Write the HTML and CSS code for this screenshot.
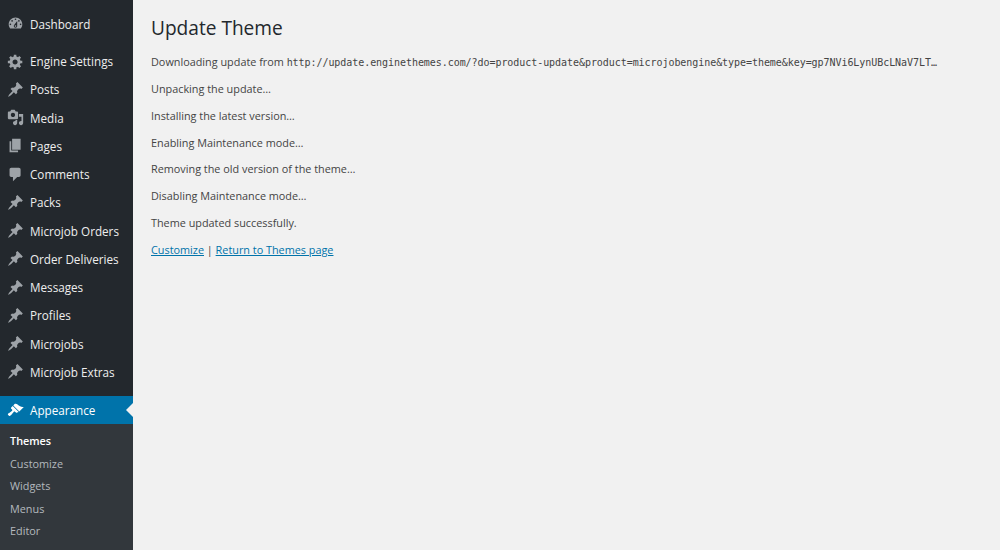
FILE: index.html
```html
<!DOCTYPE html>
<html lang="en">
<head>
  <meta charset="UTF-8">
  <title>Update Theme</title>
  <link rel="stylesheet" href="styles.css">
</head>
<body>
  <svg class="icon-defs" width="0" height="0">
    <symbol id="i-dashboard" viewBox="0 0 20 20"><path d="M3.76 16h12.48c1.1-1.37 1.76-3.11 1.76-5 0-4.42-3.58-8-8-8s-8 3.58-8 8c0 1.89.66 3.63 1.76 5zM10 4c.55 0 1 .45 1 1s-.45 1-1 1-1-.45-1-1 .45-1 1-1zM6 6c.55 0 1 .45 1 1s-.45 1-1 1-1-.45-1-1 .45-1 1-1zm8 0c.55 0 1 .45 1 1s-.45 1-1 1-1-.45-1-1 .45-1 1-1zm-5.37 5.55L12 7v6c0 1.1-.9 2-2 2s-2-.9-2-2c0-.57.24-1.08.63-1.45zM4 10c.55 0 1 .45 1 1s-.45 1-1 1-1-.45-1-1 .45-1 1-1zm12 0c.55 0 1 .45 1 1s-.45 1-1 1-1-.45-1-1 .45-1 1-1zm-5 3c0-.55-.45-1-1-1s-1 .45-1 1 .45 1 1 1 1-.45 1-1z"/></symbol>
    <symbol id="i-gear" viewBox="0 0 20 20"><path d="M18 12h-2.18c-.17.7-.44 1.35-.81 1.93l1.54 1.54-2.1 2.1-1.54-1.54c-.58.36-1.23.63-1.91.79V19H8v-2.18c-.68-.16-1.33-.43-1.91-.79l-1.54 1.54-2.12-2.12 1.54-1.54c-.36-.58-.63-1.23-.79-1.91H1V9.03h2.17c.16-.7.44-1.35.8-1.94L2.43 5.55l2.1-2.1 1.54 1.54c.58-.37 1.24-.64 1.93-.81V2h3v2.18c.68.16 1.33.43 1.91.79l1.54-1.54 2.12 2.12-1.54 1.54c.36.59.64 1.24.8 1.94H18V12zm-8.5 1.5c1.66 0 3-1.34 3-3s-1.34-3-3-3-3 1.34-3 3 1.34 3 3 3z"/></symbol>
    <symbol id="i-pin" viewBox="0 0 20 20"><path d="M10.44 3.02l1.82-1.82 6.36 6.35-1.83 1.82c-1.05-.68-2.48-.57-3.41.36l-.75.75c-.92.93-1.04 2.35-.35 3.41l-1.83 1.82-2.41-2.41-2.8 2.79c-.42.42-3.38 2.71-3.8 2.29s1.86-3.39 2.28-3.81l2.79-2.79L4.1 9.36l1.83-1.82c1.05.69 2.48.57 3.4-.36l.75-.75c.93-.92 1.05-2.35.36-3.41z"/></symbol>
    <symbol id="i-media" viewBox="0 0 20 20"><path d="M13 11V4c0-.55-.45-1-1-1h-1.67L9 1H5L3.67 3H2c-.55 0-1 .45-1 1v7c0 .55.45 1 1 1h10c.55 0 1-.45 1-1zM7 4.5c1.38 0 2.5 1.12 2.5 2.5S8.38 9.5 7 9.5 4.5 8.38 4.5 7 5.62 4.5 7 4.5zM14 6h5v10.5c0 1.38-1.12 2.5-2.5 2.5S14 17.88 14 16.5s1.12-2.5 2.5-2.5c.17 0 .34.02.5.05V9h-3V6zm-4 8.05V13h2v3.5c0 1.38-1.12 2.5-2.5 2.5S7 17.88 7 16.5 8.12 14 9.5 14c.17 0 .34.02.5.05z"/></symbol>
    <symbol id="i-pages" viewBox="0 0 20 20"><path d="M6 15V2h10v13H6zm-1 1h8v2H3V5h2v11z"/></symbol>
    <symbol id="i-comments" viewBox="0 0 20 20"><path d="M5 2h9c1.1 0 2 .9 2 2v7c0 1.1-.9 2-2 2h-2l-5 5v-5H5c-1.1 0-2-.9-2-2V4c0-1.1.9-2 2-2z"/></symbol>
    <symbol id="i-brush" viewBox="0 0 20 20"><path d="M14.48 11.06L7.41 3.99l1.5-1.5c.5-.56 2.3-.47 3.51.32 1.21.8 1.43 1.28 2.91 2.1 1.18.64 2.45 1.26 4.45.85zm-.71.71L6.7 4.7 4.93 6.47c-.39.39-.39 1.02 0 1.41l1.06 1.06c.39.39.39 1.03 0 1.42-.6.6-1.43 1.11-2.21 1.69-.35.26-.7.53-1.01.84C1.43 13.23.4 14.4 1.4 15.4c.53.53-.01-.01.58.58.99 1 2.16-.03 3.5-1.37.31-.31.58-.66.84-1.01.58-.78 1.09-1.61 1.69-2.21.39-.39 1.02-.39 1.41 0l1.06 1.06c.39.39 1.02.39 1.41 0z"/></symbol>
  </svg>

  <div class="layout">
    <nav class="sidebar">
      <a class="menu-item" href="#"><svg class="menu-icon"><use href="#i-dashboard"/></svg>Dashboard</a>
      <div class="separator"></div>
      <a class="menu-item" href="#"><svg class="menu-icon"><use href="#i-gear"/></svg>Engine Settings</a>
      <a class="menu-item" href="#"><svg class="menu-icon"><use href="#i-pin"/></svg>Posts</a>
      <a class="menu-item" href="#"><svg class="menu-icon"><use href="#i-media"/></svg>Media</a>
      <a class="menu-item" href="#"><svg class="menu-icon"><use href="#i-pages"/></svg>Pages</a>
      <a class="menu-item" href="#"><svg class="menu-icon"><use href="#i-comments"/></svg>Comments</a>
      <a class="menu-item" href="#"><svg class="menu-icon"><use href="#i-pin"/></svg>Packs</a>
      <a class="menu-item" href="#"><svg class="menu-icon"><use href="#i-pin"/></svg>Microjob Orders</a>
      <a class="menu-item" href="#"><svg class="menu-icon"><use href="#i-pin"/></svg>Order Deliveries</a>
      <a class="menu-item" href="#"><svg class="menu-icon"><use href="#i-pin"/></svg>Messages</a>
      <a class="menu-item" href="#"><svg class="menu-icon"><use href="#i-pin"/></svg>Profiles</a>
      <a class="menu-item" href="#"><svg class="menu-icon"><use href="#i-pin"/></svg>Microjobs</a>
      <a class="menu-item" href="#"><svg class="menu-icon"><use href="#i-pin"/></svg>Microjob Extras</a>
      <div class="separator separator-wide"></div>
      <a class="menu-item current" href="#"><svg class="menu-icon"><use href="#i-brush"/></svg>Appearance</a>
      <div class="submenu">
        <a class="sub-item sub-current" href="#">Themes</a>
        <a class="sub-item" href="#">Customize</a>
        <a class="sub-item" href="#">Widgets</a>
        <a class="sub-item" href="#">Menus</a>
        <a class="sub-item" href="#">Editor</a>
      </div>
    </nav>

    <main class="content">
      <h1>Update Theme</h1>
      <p>Downloading update from <code>http://update.enginethemes.com/?do=product-update&amp;product=microjobengine&amp;type=theme&amp;key=gp7NVi6LynUBcLNaV7LT…</code></p>
      <p>Unpacking the update…</p>
      <p>Installing the latest version…</p>
      <p>Enabling Maintenance mode…</p>
      <p>Removing the old version of the theme…</p>
      <p>Disabling Maintenance mode…</p>
      <p>Theme updated successfully.</p>
      <p><a href="#">Customize</a> | <a href="#">Return to Themes page</a></p>
    </main>
  </div>
</body>
</html>
```

FILE: styles.css
```css
html, body {
  height: 100%;
}

body {
  margin: 0;
  overflow: hidden;
  font-family: "Open Sans", sans-serif;
  font-size: 10.85px;
  color: #444;
  background-color: #f1f1f1;
}

.icon-defs {
  display: block;
  height: 0;
}

.layout {
  display: flex;
  height: 550px;
}

.sidebar {
  flex: 0 0 133px;
  padding-top: 9.8px;
  background-color: #23282d;
  overflow: hidden;
}

.menu-item {
  position: relative;
  display: flex;
  align-items: center;
  height: 28.25px;
  font-size: 11.7px;
  color: #eee;
  text-decoration: none;
}

.menu-icon {
  flex: none;
  width: 17px;
  height: 17px;
  margin: 0 6px 0 7px;
  fill: #9ea3a8;
}

.separator {
  height: 9px;
}

.separator-wide {
  height: 10.2px;
}

.current {
  color: #fff;
  background-color: #0073aa;
}

.current .menu-icon {
  fill: #fff;
}

.current::after {
  content: "";
  position: absolute;
  right: 0;
  top: 50%;
  margin-top: -7px;
  border: 7px solid transparent;
  border-left-width: 0;
  border-right-color: #f1f1f1;
}

.submenu {
  display: flex;
  flex-direction: column;
  padding: 5.5px 0;
  height: 100%;
  background-color: #32373c;
}

.sub-item {
  padding-left: 10px;
  line-height: 22.6px;
  color: #b4b9be;
  text-decoration: none;
}

.sub-current {
  color: #fff;
  font-weight: 600;
}

.content {
  flex: 1;
  padding: 16.3px 18px 0;
}

h1 {
  margin: 0 0 15px;
  font-size: 19.1px;
  font-weight: 400;
  line-height: 24px;
  color: #23282d;
}

p {
  margin: 0 0 12px;
  height: 14.8px;
  line-height: 14.8px;
  white-space: nowrap;
}

code {
  font-family: "DejaVu Sans Mono", monospace;
  font-size: 10px;
  letter-spacing: -0.055px;
}

a {
  color: #0073aa;
}
```
